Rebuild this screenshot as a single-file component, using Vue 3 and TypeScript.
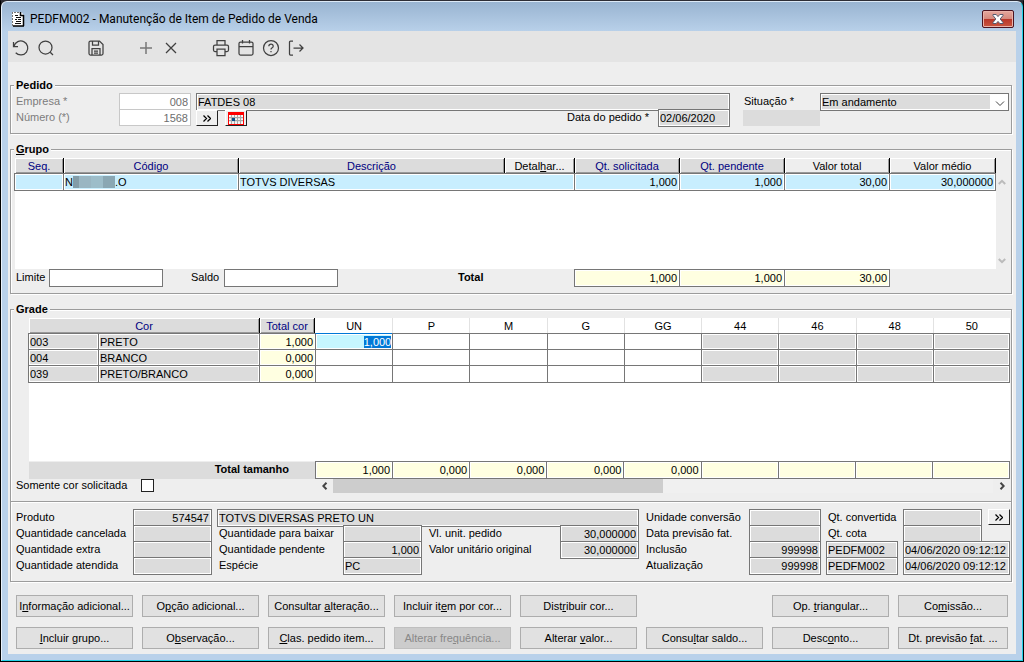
<script setup lang="ts">
import { onMounted, ref } from 'vue'

interface ActionButton {
  text: string
  disabled?: boolean
}

interface ColorRow {
  code: string
  name: string
  total: string
  sizes: string[]
}

// "&" marks the mnemonic letter
function mnemonic(text: string): [string, string, string] {
  const at = text.indexOf('&')
  if (at < 0) return [text, '', '']
  return [text.slice(0, at), text.charAt(at + 1), text.slice(at + 2)]
}

const sizes = ['UN', 'P', 'M', 'G', 'GG', '44', '46', '48', '50']
const openSizes = 5

const colors = ref<ColorRow[]>([
  { code: '003', name: 'PRETO', total: '1,000', sizes: ['1,000', '', '', '', ''] },
  { code: '004', name: 'BRANCO', total: '0,000', sizes: ['', '', '', '', ''] },
  { code: '039', name: 'PRETO/BRANCO', total: '0,000', sizes: ['', '', '', '', ''] },
])

const sizeTotals = ['1,000', '0,000', '0,000', '0,000', '0,000', '', '', '', '']

const actions: (ActionButton | null)[] = [
  { text: 'I&nformação adicional...' },
  { text: 'O&pção adicional...' },
  { text: 'Consultar &alteração...' },
  { text: 'Incluir it&em por cor...' },
  { text: 'Dist&ribuir cor...' },
  null,
  { text: 'Op. &triangular...' },
  { text: 'Co&missão...' },
  { text: '&Incluir grupo...' },
  { text: 'O&bservação...' },
  { text: '&Clas. pedido item...' },
  { text: 'Alterar fre&quência...', disabled: true },
  { text: 'Alterar &valor...' },
  { text: 'Consu&ltar saldo...' },
  { text: 'Desc&onto...' },
  { text: 'Dt. previsão &fat. ...' },
]

const onlyRequested = ref(false)
const limit = ref('')
const balance = ref('')
const grid = ref<HTMLTableElement | null>(null)

onMounted(() => {
  const first = grid.value?.querySelector('input')
  first?.focus()
  first?.select()
})
</script>

<template>
  <div class="window">
    <div class="frame">
      <header class="titlebar">
        <svg class="doc-icon" width="14" height="16" viewBox="0 0 14 16" aria-hidden="true">
          <path d="M1 1h9l3 3v11H1z" fill="#fff" />
          <path d="M1.500 1v2M1.500 4v2M1.500 7v2M1.500 10v2M1.500 13v2M3 1.500h2M6 1.500h2" stroke="#777" fill="none" />
          <path d="M9.500 1v3.500H13M12.500 4v11M2 15h11" stroke="#000" stroke-width="1.500" fill="none" />
          <path d="M4 4.500h3M5 6.500h5M4 8.500h2M7 8.500h3M5 10.500h5M4 12.500h6" stroke="#111" fill="none" />
        </svg>
        <h1>PEDFM002 - Manutenção de Item de Pedido de Venda</h1>
        <button class="close" type="button" aria-label="Fechar">
          <svg width="12" height="10" viewBox="0 0 12 10">
            <path d="M1 .5h3.200L6 2.600 7.800.5H11v1L8.200 5 11 8.500v1H7.800L6 7.400 4.200 9.500H1v-1L3.800 5 1 1.500z" fill="#fff" stroke="#555b70" />
          </svg>
        </button>
      </header>

      <main class="client">
        <nav class="toolbar" aria-label="Ferramentas">
          <button type="button" aria-label="Desfazer">
            <svg viewBox="0 0 18 18"><path d="M1.500 3v4.500H6M2 7.300A7 7 0 1 1 3.700 13.800" /></svg>
          </button>
          <button type="button" aria-label="Pesquisar">
            <svg viewBox="0 0 18 18"><circle cx="8.500" cy="8.500" r="6.500" /><path d="M13.200 13.200 16 16" /></svg>
          </button>
          <i></i>
          <button type="button" aria-label="Salvar">
            <svg viewBox="0 0 18 18"><path d="M2 3.500Q2 2 3.500 2H12.500L16 5.500V14.500Q16 16 14.500 16H3.500Q2 16 2 14.500zM5.500 2V6H11.500V2M5 16V9.500H13V16M7 12H11M7 14H11" /></svg>
          </button>
          <i></i>
          <button class="soft" type="button" aria-label="Incluir">
            <svg viewBox="0 0 18 18"><path d="M9 3V15M3 9H15" /></svg>
          </button>
          <button type="button" aria-label="Excluir">
            <svg viewBox="0 0 18 18"><path d="M4 4 14 14M14 4 4 14" /></svg>
          </button>
          <i></i>
          <button type="button" aria-label="Imprimir">
            <svg viewBox="0 0 18 18"><path d="M5 6V1.500H13V6M5 12.500H3Q1.500 12.500 1.500 11V7.500Q1.500 6 3 6H15Q16.500 6 16.500 7.500V11Q16.500 12.500 15 12.500H13M5 10H13V16.500H5z" /></svg>
          </button>
          <button type="button" aria-label="Calendário">
            <svg viewBox="0 0 18 18"><rect x="2" y="3" width="14" height="13" rx="1.500" /><path d="M2 7.500H16M5.500 1V4.500M12.500 1V4.500" /></svg>
          </button>
          <button type="button" aria-label="Ajuda">
            <svg viewBox="0 0 18 18"><circle cx="9" cy="9" r="7.500" /><path d="M6.800 7.300Q6.900 5.200 9 5.200T11.200 7.200Q11.200 8.300 9.900 9 9 9.500 9 10.500M9 12V13.300" /></svg>
          </button>
          <button type="button" aria-label="Sair">
            <svg viewBox="0 0 18 18"><path d="M6 2H3.500Q2.500 2 2.500 3V15Q2.500 16 3.500 16H6M6.500 9H16M12.500 5.500 16 9 12.500 12.500" /></svg>
          </button>
        </nav>

        <fieldset class="group order">
          <legend>Pedido</legend>
          <div class="order-grid">
            <label class="dim" for="empresa">Empresa *</label>
            <input id="empresa" class="plain num" value="008" disabled />
            <input class="field inset" value="FATDES 08" aria-label="Nome da empresa" readonly />
            <label for="situacao">Situação *</label>
            <div class="combo">
              <select id="situacao"><option>Em andamento</option></select>
              <svg width="10" height="6" viewBox="0 0 10 6" aria-hidden="true"><path d="M1 .5 5 4.500 9 .5" /></svg>
            </div>

            <label class="dim" for="numero">Número (*)</label>
            <input id="numero" class="plain num" value="1568" disabled />
            <div class="order-tools">
              <button class="mini" type="button" aria-label="Detalhes do pedido">
                <svg width="8" height="7" viewBox="0 0 8 7"><path d="M.5.500 3.500 3.500.5 6.500M4.500.5 7.500 3.500 4.500 6.500" /></svg>
              </button>
              <button class="mini" type="button" aria-label="Abrir calendário">
                <svg width="16" height="13" viewBox="0 0 16 13">
                  <path d="M0 0h16v13H0z" fill="#f00" stroke="none" />
                  <path d="M1 3h14v9H1z" fill="#fff" stroke="none" />
                  <path d="M3.500 3v9M6.500 3v9M9.500 3v9M12.500 3v9M1 5.500h14M1 8.500h14" stroke="#a8a8a8" />
                  <path d="M4 6h3v3H4z" fill="#0a4f8a" stroke="none" />
                </svg>
              </button>
              <label class="date-label" for="data">Data do pedido *</label>
              <input id="data" class="field date" value="02/06/2020" readonly />
            </div>
            <div class="blank"></div>
          </div>
        </fieldset>

        <fieldset class="group items">
          <legend><u>G</u>rupo</legend>
          <div class="items-area">
            <div class="sheet">
              <table>
                <colgroup>
                  <col class="w-seq" /><col class="w-code" /><col /><col class="w-detail" />
                  <col class="w-qty" /><col class="w-qty" /><col class="w-qty" /><col class="w-last" />
                </colgroup>
                <thead>
                  <tr>
                    <th>Seq.</th>
                    <th>Código</th>
                    <th>Descrição</th>
                    <th class="light"><button type="button">Detal<u>h</u>ar...</button></th>
                    <th>Qt. solicitada</th>
                    <th>Qt. pendente</th>
                    <th class="light">Valor total</th>
                    <th class="light end">Valor médio</th>
                  </tr>
                </thead>
                <tbody class="cyan">
                  <tr>
                    <td></td>
                    <td><span class="code">N<span class="mosaic"></span>.O</span></td>
                    <td colspan="2">TOTVS DIVERSAS</td>
                    <td class="num">1,000</td>
                    <td class="num">1,000</td>
                    <td class="num">30,00</td>
                    <td class="num">30,000000</td>
                  </tr>
                </tbody>
              </table>
            </div>
            <div class="vscroll">
              <button type="button" aria-label="Rolar para cima"><svg width="8" height="6" viewBox="0 0 8 6"><path d="M.8 5 4 1.800 7.200 5" /></svg></button>
              <button type="button" aria-label="Rolar para baixo"><svg width="8" height="6" viewBox="0 0 8 6"><path d="M.8 1 4 4.200 7.200 1" /></svg></button>
            </div>
          </div>
          <div class="items-foot">
            <label class="limit" for="limite">Limite</label>
            <input id="limite" v-model="limit" class="entry" />
            <label class="balance" for="saldo">Saldo</label>
            <input id="saldo" v-model="balance" class="entry" />
            <strong>Total</strong>
            <output>1,000</output>
            <output>1,000</output>
            <output>30,00</output>
          </div>
        </fieldset>

        <fieldset class="group colors">
          <legend>Grade</legend>
          <div class="sheet grid-sheet">
            <table ref="grid">
              <colgroup>
                <col class="w-cor" /><col class="w-name" /><col class="w-total" />
                <col v-for="s in sizes" :key="s" />
              </colgroup>
              <thead>
                <tr>
                  <th colspan="2">Cor</th>
                  <th class="end">Total cor</th>
                  <th v-for="s in sizes" :key="s" class="size">{{ s }}</th>
                </tr>
              </thead>
              <tbody>
                <tr v-for="row in colors" :key="row.code">
                  <td class="gray">{{ row.code }}</td>
                  <td class="gray">{{ row.name }}</td>
                  <td class="cream num">{{ row.total }}</td>
                  <td v-for="(s, i) in sizes" :key="s" :class="i < openSizes ? 'edit' : 'gray'">
                    <input v-if="i < openSizes" v-model="row.sizes[i]" :aria-label="row.name + ' ' + s" />
                  </td>
                </tr>
              </tbody>
            </table>
          </div>
          <div class="size-totals">
            <strong>Total tamanho</strong>
            <output v-for="(t, i) in sizeTotals" :key="i">{{ t }}</output>
          </div>
          <div class="grid-foot">
            <label for="somente">Somente cor solicitada</label>
            <input id="somente" v-model="onlyRequested" type="checkbox" />
            <div class="hscroll">
              <button type="button" aria-label="Rolar para a esquerda"><svg width="6" height="8" viewBox="0 0 6 8"><path d="M4.500.8 1.300 4 4.500 7.200" /></svg></button>
              <div class="track"><div class="thumb"></div></div>
              <button type="button" aria-label="Rolar para a direita"><svg width="6" height="8" viewBox="0 0 6 8"><path d="M1.500.8 4.700 4 1.500 7.200" /></svg></button>
            </div>
          </div>
        </fieldset>

        <section class="product">
          <label for="produto">Produto</label>
          <input id="produto" class="field num" value="574547" readonly />
          <input class="field inset wide" value="TOTVS DIVERSAS PRETO UN" aria-label="Descrição do produto" readonly />
          <label class="pad" for="conversao">Unidade conversão</label>
          <input id="conversao" class="field" readonly />
          <label class="pad" for="convertida">Qt. convertida</label>
          <div class="converted">
            <input id="convertida" class="field" readonly />
            <button class="mini" type="button" aria-label="Detalhes da conversão">
              <svg width="8" height="7" viewBox="0 0 8 7"><path d="M.5.500 3.500 3.500.5 6.500M4.500.5 7.500 3.500 4.500 6.500" /></svg>
            </button>
          </div>

          <label for="cancelada">Quantidade cancelada</label>
          <input id="cancelada" class="field" readonly />
          <label class="pad" for="baixar">Quantidade para baixar</label>
          <input id="baixar" class="field" readonly />
          <label class="pad" for="unitario">Vl. unit. pedido</label>
          <input id="unitario" class="field num" value="30,000000" readonly />
          <label class="pad" for="previsao">Data previsão fat.</label>
          <input id="previsao" class="field" readonly />
          <label class="pad" for="cota">Qt. cota</label>
          <div class="converted"><input id="cota" class="field" readonly /></div>

          <label for="extra">Quantidade extra</label>
          <input id="extra" class="field" readonly />
          <label class="pad" for="pendente">Quantidade pendente</label>
          <input id="pendente" class="field num" value="1,000" readonly />
          <label class="pad" for="original">Valor unitário original</label>
          <input id="original" class="field num" value="30,000000" readonly />
          <label class="pad" for="inclusao">Inclusão</label>
          <input id="inclusao" class="field num" value="999998" readonly />
          <input class="field user" value="PEDFM002" aria-label="Programa de inclusão" readonly />
          <input class="field" value="04/06/2020 09:12:12" aria-label="Data de inclusão" readonly />

          <label for="atendida">Quantidade atendida</label>
          <input id="atendida" class="field" readonly />
          <label class="pad" for="especie">Espécie</label>
          <input id="especie" class="field" value="PC" readonly />
          <label class="pad update" for="atualizacao">Atualização</label>
          <input id="atualizacao" class="field num" value="999998" readonly />
          <input class="field user" value="PEDFM002" aria-label="Programa de atualização" readonly />
          <input class="field" value="04/06/2020 09:12:12" aria-label="Data de atualização" readonly />
        </section>

        <div class="actions">
          <template v-for="(a, i) in actions" :key="i">
            <button v-if="a" type="button" :disabled="a.disabled">{{ mnemonic(a.text)[0] }}<u>{{ mnemonic(a.text)[1] }}</u>{{ mnemonic(a.text)[2] }}</button>
            <span v-else></span>
          </template>
        </div>
      </main>
    </div>
  </div>
</template>

<style>
body {
  background: #2a2a30;
}
</style>

<style scoped>
.window,
.window * {
  box-sizing: border-box;
}

.window {
  display: flex;
  min-height: 100vh;
  border: 1px solid #000;
  border-top-color: #2d2d35;
  font: 11px/16px "Liberation Sans", Arial, sans-serif;
  color: #000;
  white-space: nowrap;
}

.frame {
  flex: 1;
  min-width: 0;
  padding: 0 6px 6px;
  border: 1px solid #22d2e8;
  border-top-color: #dce9f6;
  border-left-color: #eaf2fb;
  border-radius: 6px 6px 0 0;
  background: linear-gradient(#99b4d1, #b9d1ea 30px);
}

input,
select,
button {
  margin: 0;
  padding: 0;
  border: 0;
  border-radius: 0;
  outline: none;
  font: inherit;
  color: inherit;
  min-width: 0;
}

svg {
  display: block;
  fill: none;
  stroke: #333;
}

.num {
  text-align: right;
}

.titlebar {
  display: flex;
  align-items: center;
  height: 29px;
  padding: 4px 2px 0 3px;
}

.titlebar h1 {
  flex: 1;
  margin: 0 0 0 5px;
  font: 12px/18px Roboto, "Noto Sans", sans-serif;
}

.doc-icon {
  stroke: none;
}

.close {
  display: grid;
  place-items: center;
  width: 32px;
  height: 18px;
  border: 1px solid #4c1420;
  border-radius: 2px;
  background: linear-gradient(#e5a89e, #d58a7e 48%, #b9372a 52%, #c9563f);
  box-shadow: inset 0 0 0 1px #e9b3aa;
}

.client {
  background: #eee;
  padding-bottom: 5px;
}

.toolbar {
  display: flex;
  height: 31px;
  padding-top: 4px;
  background: #e4e4e4;
}

.toolbar button,
.toolbar i {
  display: grid;
  place-items: center;
  width: 25px;
  height: 26px;
  background: none;
}

.toolbar svg {
  width: 18px;
  height: 18px;
  stroke: #404040;
  stroke-width: 1.25;
}

.toolbar .soft svg {
  stroke: #777;
  stroke-width: 1.5;
}

.group,
.product {
  min-width: 0;
  margin: 9px 4px 0 2px;
  border: 1px solid #9c9c9c;
  box-shadow: 1px 1px 0 #fff, inset 1px 1px 0 #fff;
}

.group legend {
  margin-left: -2px;
  padding: 0 2px;
  background: #eee;
  font-weight: bold;
  line-height: 12px;
}

.group.items legend {
  margin-left: 0;
}

.order {
  margin-top: 17px;
  padding: 2px 2px 8px 5px;
}

.group.items {
  padding: 3px 3px 6px;
}

.colors {
  padding: 3px 1px 8px 5px;
}

.order-grid {
  display: grid;
  grid-template-columns: 103px 72px minmax(0, 1fr) 77px 189px;
  grid-auto-rows: 16px;
}

.order-grid > label:not(.dim) {
  padding-left: 1px;
}

.order-grid > input.inset {
  margin-right: 13px;
}

.dim {
  color: #7c7c7c;
}

.plain {
  height: 17px;
  padding: 1px 2px 0;
  border: 1px solid #c8c8c8;
  background: #fff;
  color: #6d6d6d;
}

.field {
  width: 100%;
  height: 18px;
  padding: 0 2px 0 1px;
  border: 1px solid #767676;
  background: #dcdcdc;
  box-shadow: inset 0 0 0 1px #fff;
}

.inset {
  width: auto;
  margin-left: 5px;
}

.combo {
  position: relative;
  height: 18px;
}

.combo select {
  display: block;
  width: 100%;
  height: 18px;
  padding: 0 20px 1px 1px;
  border: 1px solid #767676;
  appearance: none;
  background: linear-gradient(90deg, #dcdcdc calc(100% - 18px), #fff 0);
  box-shadow: inset 0 0 0 1px #fff;
}

.combo svg {
  position: absolute;
  right: 4px;
  top: 8px;
  stroke: #444;
  pointer-events: none;
}

.order-tools {
  display: flex;
  margin: 0 13px 0 5px;
}

.mini {
  display: grid;
  place-items: center;
  width: 22px;
  height: 16px;
  background: #eee;
  border: 1px solid #fff;
  border-right-color: #222;
  border-bottom-color: #222;
}

.mini svg {
  stroke: #000;
  stroke-width: 1.25;
}

.order-tools .mini {
  margin: 1px 7px 0 0;
}

.date-label {
  margin: 0 9px 0 auto;
}

.date {
  width: 72px;
}

.blank {
  height: 16px;
  margin-top: 1px;
  background: #dcdcdc;
}

.items-area {
  display: flex;
  height: 111px;
}

.sheet {
  flex: 1;
  min-width: 0;
  background: linear-gradient(90deg, #eee 1px, #fff 0);
}

table {
  width: 100%;
  table-layout: fixed;
  border-spacing: 0;
}

.w-seq { width: 49px; }
.w-code { width: 175px; }
.w-detail { width: 70px; }
.w-qty { width: 105px; }
.w-last { width: 107px; }
.w-cor { width: 70px; }
.w-name { width: 161px; }
.w-total { width: 56px; }

th {
  height: 15px;
  padding: 0;
  border-left: 1px solid #000;
  background: #dcdcdc;
  box-shadow: inset 1px 1px 0 #fff, inset -1px -1px 0 #999;
  color: #000080;
  font-weight: normal;
  line-height: 14px;
}

th:first-child {
  border-left-color: #eee;
}

th.end {
  border-right: 1px solid #000;
}

th.light {
  background: #eee;
  color: #000;
}

th button {
  width: 100%;
  height: 14px;
  background: none;
}

th.size {
  border-left: 1px solid #e2e2e2;
  background: #fff;
  box-shadow: none;
  color: #000;
}

th.end + .size {
  border-left-color: #fff;
}

td {
  height: 16px;
  padding: 1px 1px 0;
  border: solid #767676;
  border-width: 1px 0 0 1px;
  box-shadow: inset 0 0 0 1px #fff;
  line-height: 14px;
  vertical-align: top;
}

td:last-child {
  border-right-width: 1px;
}

tbody tr:last-child td {
  height: 18px;
  border-bottom-width: 1px;
}

td.num {
  padding-right: 2px;
}

.cyan td {
  background: #c8eefe;
}

.gray {
  background: #dcdcdc;
}

.cream {
  background: #ffffe1;
}

.edit {
  padding: 0;
  background: #fff;
}

.edit input {
  display: block;
  width: 100%;
  height: 15px;
  padding: 1px 1px 0 0;
  background: none;
  line-height: 14px;
  text-align: right;
}

.edit:focus-within {
  border-top-color: #0078d7;
  background: #c6f6ff;
}

.edit input::selection {
  background: #0078d7;
  color: #fff;
}

.code {
  display: flex;
  align-items: center;
}

.mosaic {
  width: 42px;
  height: 12px;
  background: linear-gradient(90deg, #839ca7 6px, #9ab6c2 6px 18px, #9dbdc9 18px 30px, #8aa7b3 30px);
}

.vscroll {
  display: flex;
  flex-direction: column;
  justify-content: space-between;
  width: 12px;
  padding-top: 15px;
}

.vscroll button {
  display: grid;
  place-items: center;
  height: 17px;
  background: none;
}

.vscroll svg {
  stroke: #bbb;
  stroke-width: 2;
}

.items-foot {
  display: flex;
  height: 18px;
  padding-right: 118px;
}

.limit {
  width: 35px;
  padding-left: 2px;
}

.entry {
  width: 114px;
  height: 18px;
  padding: 0 2px;
  border: 1px solid #767676;
  background: #fff;
}

.balance {
  width: 61px;
  padding-left: 28px;
}

.items-foot strong {
  flex: 1;
  padding-left: 120px;
}

output {
  height: 18px;
  padding: 0 2px;
  border: solid #767676;
  border-width: 1px 0 1px 1px;
  background: #ffffe1;
  box-shadow: inset 0 0 0 1px #fff;
  text-align: right;
}

output:last-child {
  border-right-width: 1px;
}

.items-foot output {
  width: 105px;
}

.items-foot output:last-child {
  width: 106px;
}

.grid-sheet {
  height: 143px;
  margin-left: 12px;
}

.size-totals {
  display: flex;
  margin: 0 0 -1px 13px;
}

.size-totals strong {
  width: 286px;
  height: 17px;
  padding-right: 26px;
  margin-top: 1px;
  background: #dcdcdc;
  text-align: right;
  line-height: 15px;
}

.size-totals output {
  flex: 1;
}

.grid-foot {
  display: flex;
  align-items: center;
  height: 15px;
}

.grid-foot label {
  width: 125px;
  line-height: 15px;
}

.grid-foot input {
  width: 13px;
  height: 13px;
  appearance: none;
  border: 1px solid #222;
  background: #fff;
}

.grid-foot input:checked {
  background: #333;
  box-shadow: inset 0 0 0 2px #fff;
}

.hscroll {
  display: flex;
  flex: 1;
  height: 15px;
  margin-left: 162px;
}

.hscroll button {
  display: grid;
  place-items: center;
  width: 17px;
  background: none;
}

.hscroll svg {
  stroke: #444;
  stroke-width: 2;
}

.track {
  flex: 1;
  background: #f0f0f0;
}

.thumb {
  width: 50%;
  height: 15px;
  background: #cdcdcd;
}

.size-totals output {
  position: relative;
}

.product {
  display: grid;
  grid-template-columns: 117fr 79px 131fr 79px 138fr 79px 110fr 72px 82px 107px;
  grid-auto-rows: 16px;
  margin-top: 0;
  padding: 7px 1px 8px 5px;
  border-top: 0;
}

.pad {
  padding-left: 7px;
}

.wide {
  grid-column: 3 / 7;
}

.update {
  grid-column: 7;
}

.user {
  width: 72px;
  margin-left: 5px;
}

.converted {
  display: flex;
  justify-content: space-between;
}

.converted .field {
  width: 79px;
}

.actions {
  display: grid;
  grid-template-columns: repeat(7, 117fr) 110fr;
  gap: 10px 9px;
  margin: 13px 8px 0;
}

.actions button {
  height: 22px;
  border: 1px solid #adadad;
  background: #e1e1e1;
  line-height: 20px;
}

.actions button:disabled {
  border-color: #bfbfbf;
  background: #ccc;
  color: #888;
}
</style>
